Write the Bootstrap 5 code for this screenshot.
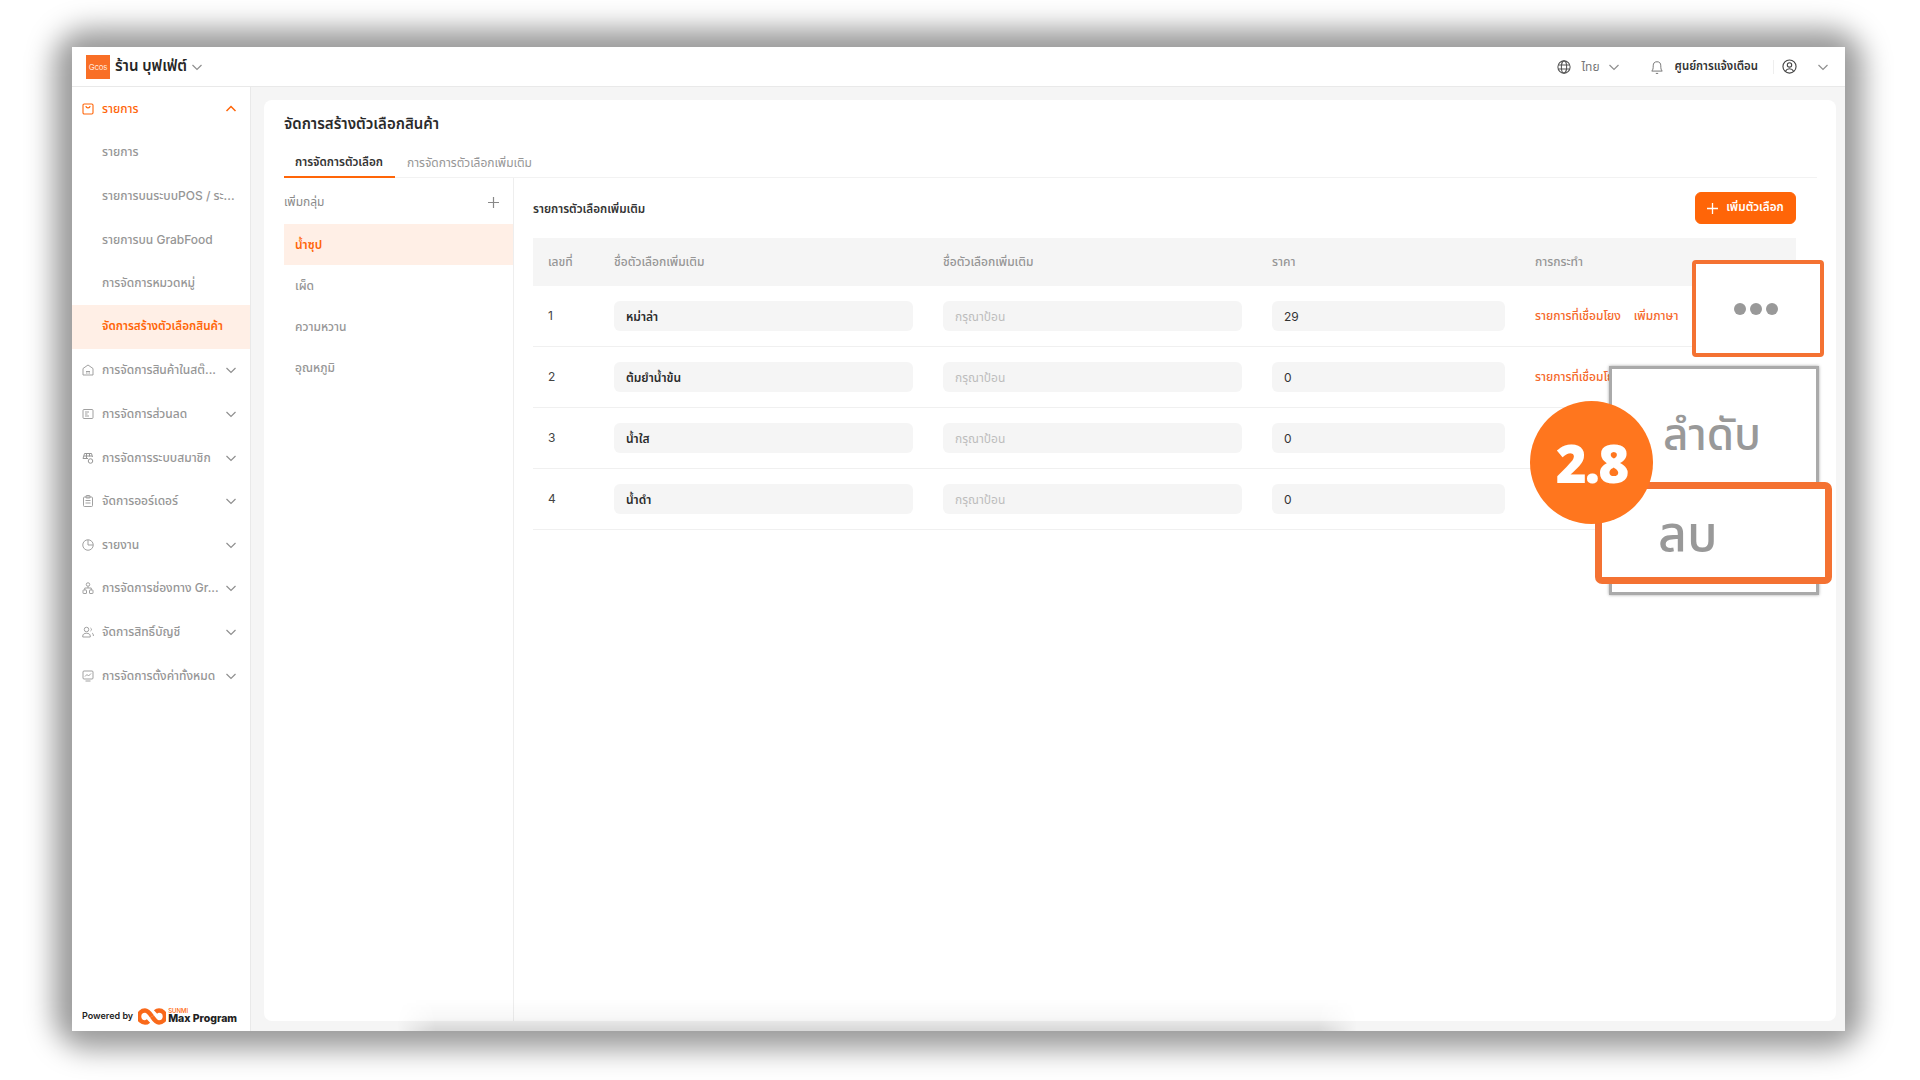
<!DOCTYPE html>
<html lang="th">
<head>
    <meta charset="UTF-8">
    <title>จัดการสร้างตัวเลือกสินค้า</title>
    <link rel="stylesheet" href="https://cdn.jsdelivr.net/npm/bootstrap@5.3.0/dist/css/bootstrap.min.css">
    <style>
        :root {
            --brand: #ff6508;
            --brand-soft: #ffefe6;
            --mark: #f47232;
            --muted: #969696;
            --ink: #262626;
        }

        html, body { height: 100%; }

        body {
            background: #fff;
            padding: 47px 75px 49px 72px;
            overflow: hidden;
            font-family: Inter, "Noto Sans Thai", "Noto Sans", "Noto Sans CJK SC", sans-serif;
            font-size: 12px;
            color: var(--ink);
        }

        /* window */
        .shot-window {
            position: relative;
            height: 984px;
            background: #f5f5f5;
        }

        /* soft rounded shadow round the window */
        .shot-window::before {
            content: "";
            position: absolute;
            inset: -18px;
            z-index: -1;
            border-radius: 34px;
            background: rgba(0, 0, 0, .4);
            filter: blur(14px);
        }

        /* smudge along the bottom edge of the picture */
        .shot-window::after {
            content: "";
            position: absolute;
            left: 325px;
            bottom: 0;
            width: 960px;
            height: 32px;
            pointer-events: none;
            background: linear-gradient(to bottom, rgba(0, 0, 0, 0), rgba(0, 0, 0, .03) 60%, rgba(0, 0, 0, .12));
            -webkit-mask-image: linear-gradient(to right, transparent, #000 4%, #000 96%, transparent);
        }

        .top-bar {
            height: 40px;
            background: #fff;
            border-bottom: 1px solid #e9e9e9;
            padding: 0 16px 0 14px;
        }

        .shop-logo {
            width: 24px;
            height: 24px;
            background: #f96f26;
            color: #ffe6d8;
            font-size: 8px;
            line-height: 24px;
            text-align: center;
            letter-spacing: -.3px;
        }

        .shop-name { font-size: 15px; font-weight: 600; margin-left: 5px; }
        .chev { color: #8f8f8f; flex: none; }
        .top-label { font-size: 12px; color: #777; }
        .top-strong { font-size: 11.400px; font-weight: 600; color: #333; }
        .top-rule { width: 1px; height: 14px; background: #eee; }

        /* sidebar */
        .side-bar {
            width: 179px;
            flex: none;
            background: #fff;
            border-right: 1px solid #e9e9e9;
        }

        .side-item {
            height: 43.6px;
            padding: 0 13px 0 10px;
            color: var(--muted);
            font-weight: 500;
            white-space: nowrap;
        }

        .side-item svg.ico { width: 12px; height: 12px; flex: none; margin-right: 8px; }
        .side-text { flex: 1; }
        .side-sub { padding-left: 30px; }
        .side-open { color: var(--brand); }
        .side-on { color: var(--brand); background: var(--brand-soft); font-weight: 600; font-size: 11.700px; }

        .power-row {
            margin-top: auto;
            height: 30px;
            padding: 0 0 0 10px;
            font-size: 9px;
            font-weight: 600;
            color: #222;
            white-space: nowrap;
        }

        .max-word { font-size: 10.500px; font-weight: 800; line-height: 10px; color: #222; }
        .sunmi-word { font-size: 6px; line-height: 6px; color: var(--brand); font-weight: 500; }

        /* content */
        .page-wrap { padding: 13px 9px 10px 13px; min-width: 0; }

        .page-card {
            background: #fff;
            border-radius: 8px;
            padding: 12px 0 0 20px;
        }

        .page-title { font-size: 15px; font-weight: 600; margin: 0; line-height: 24px; color: #2b2b2b; }

        .tab-strip {
            margin: 14px 19px 0 0;
            border-bottom: 1px solid #f2f2f2;
            height: 28px;
        }

        .tab-link {
            padding: 0 12px;
            font-size: 12px;
            line-height: 25px;
            color: var(--muted);
            height: 28px;
            border-bottom: 2px solid transparent;
        }

        .tab-link.is-on { color: #333; font-weight: 600; border-bottom-color: var(--brand); width: 111px; padding: 0 11px; white-space: nowrap; font-size: 11.700px; }

        .group-col { width: 230px; flex: none; border-right: 1px solid #eee; }
        .group-head { height: 46px; color: #8a8a8a; padding: 2px 14px 0 0; }
        .group-row { height: 41px; padding-left: 11px; color: var(--muted); font-weight: 500; line-height: 41px; }
        .group-row.is-on { background: var(--brand-soft); color: var(--brand); font-weight: 600; }

        .option-col { padding: 14px 40px 0 19px; min-width: 0; }
        .option-title { font-size: 11.700px; font-weight: 600; color: #333; padding-top: 3px; }

        .add-btn {
            width: 101px;
            height: 32px;
            padding: 0;
            font-size: 11.700px;
            font-weight: 600;
            background: var(--brand);
            border-color: var(--brand);
            border-radius: 6px;
        }

        .opt-table { table-layout: fixed; width: 100%; margin: 14px 0 0; }
        .opt-table th {
            height: 48px;
            background: #f5f5f5;
            color: var(--muted);
            font-weight: 500;
            padding: 0 15px;
            vertical-align: middle;
            border: 0;
        }

        .opt-table td {
            height: 60.750px;
            padding: 0 15px;
            vertical-align: middle;
            border-bottom: 1px solid #f0f0f0;
            white-space: nowrap;
            color: #444;
        }

        .opt-field {
            height: 30px;
            line-height: 31px;
            padding: 0 12px;
            background: #f5f5f5;
            border: 0;
            border-radius: 6px;
            font-size: 12px;
            color: #333;
        }

        .opt-field.is-name { font-weight: 600; color: #2b2b2b; }
        .opt-field.is-empty { color: #bdbdbd; }
        .act-link { color: #f5682a; margin-right: 13px; font-weight: 500; }

        /* tutorial marks over the page */
        .mark-dots {
            position: absolute;
            left: 1620px;
            top: 213px;
            width: 132px;
            height: 97px;
            padding-right: 4px;
            background: #fff;
            border: 4px solid var(--mark);
            border-radius: 4px;
            z-index: 2;
        }

        .mark-dots i { width: 12px; height: 12px; border-radius: 50%; background: #999; }

        .mark-menu {
            position: absolute;
            left: 1537px;
            top: 319px;
            width: 210px;
            height: 229px;
            background: #fff;
            border: 3px solid #aaa;
            box-shadow: 0 0 3px rgba(0, 0, 0, .35);
            color: #999;
            font-size: 44px;
            font-weight: 500;
            line-height: 60px;
            padding: 35px 0 0 51px;
            z-index: 2;
        }

        .mark-del {
            position: absolute;
            left: 1523px;
            top: 435px;
            width: 237px;
            height: 102px;
            background: #fff;
            border: 7px solid var(--mark);
            border-radius: 7px;
            color: #999;
            font-size: 50px;
            font-weight: 500;
            line-height: 60px;
            padding: 14px 0 0 56px;
            z-index: 2;
        }

        .mark-badge {
            position: absolute;
            left: 1458px;
            top: 354px;
            width: 123px;
            height: 123px;
            border-radius: 50%;
            background: #ff761e;
            color: #fff;
            font-family: "Open Sans", sans-serif;
            font-size: 53px;
            font-weight: 800;
            letter-spacing: -2px;
            z-index: 2;
        }
    </style>
</head>
<body>

    <div class="shot-window d-flex flex-column">

        <header class="top-bar d-flex align-items-center flex-none">
            <div class="shop-logo">Gcos</div>
            <span class="shop-name">ร้าน บุฟเฟ่ต์</span>
            <svg class="chev ms-1" width="12" height="12" viewBox="0 0 12 12" fill="none" stroke="currentColor" stroke-width="1.2"><path d="M1.5 4l4.5 4.5L10.500 4"/></svg>

            <svg class="ms-auto" width="14" height="14" viewBox="0 0 24 24" fill="none" stroke="#555" stroke-width="1.8"><circle cx="12" cy="12" r="10.500"/><ellipse cx="12" cy="12" rx="4.500" ry="10.500"/><path d="M2 8.500h20M2 15.500h20"/></svg>
            <span class="top-label" style="margin-left:10px">ไทย</span>
            <svg class="chev" style="margin-left:8px" width="12" height="12" viewBox="0 0 12 12" fill="none" stroke="currentColor" stroke-width="1.2"><path d="M1.5 4l4.5 4.5L10.500 4"/></svg>
            <svg style="margin-left:30px" width="14" height="16" viewBox="0 0 24 26" fill="none" stroke="#777" stroke-width="1.7"><path d="M3 20c2-2 2.500-4 2.500-9a6.500 7 0 0 1 13 0c0 5 .5 7 2.500 9z"/><path d="M10 24h4"/></svg>
            <span class="top-strong" style="margin-left:11px">ศูนย์การแจ้งเตือน</span>
            <span class="top-rule" style="margin-left:15px"></span>
            <svg style="margin-left:8px" width="15" height="15" viewBox="0 0 24 24" fill="none" stroke="#444" stroke-width="1.8"><circle cx="12" cy="12" r="10.500"/><circle cx="12" cy="9.500" r="3.500"/><path d="M5.500 19.500c1.500-3 4-4 6.500-4s5 1 6.500 4"/></svg>
            <svg class="chev" style="margin-left:20px" width="12" height="12" viewBox="0 0 12 12" fill="none" stroke="currentColor" stroke-width="1.2"><path d="M1.500 4l4.500 4.500L10.500 4"/></svg>
        </header>

        <div class="d-flex flex-grow-1" style="min-height:0">

            <aside class="side-bar d-flex flex-column">
                <div class="side-item side-open d-flex align-items-center">
                    <svg class="ico" viewBox="0 0 24 24" fill="none" stroke="currentColor" stroke-width="2.200"><rect x="2" y="2" width="20" height="20" rx="2.500"/><path d="M8 6c0 5 8 5 8 0"/></svg>
                    <span class="side-text">รายการ</span>
                    <svg width="12" height="12" viewBox="0 0 12 12" fill="none" stroke="currentColor" stroke-width="1.500"><path d="M1.500 8L6 3.500 10.500 8"/></svg>
                </div>
                <div class="side-item side-sub d-flex align-items-center"><span class="side-text">รายการ</span></div>
                <div class="side-item side-sub d-flex align-items-center"><span class="side-text">รายการบนระบบPOS / ระ...</span></div>
                <div class="side-item side-sub d-flex align-items-center"><span class="side-text">รายการบน GrabFood</span></div>
                <div class="side-item side-sub d-flex align-items-center"><span class="side-text">การจัดการหมวดหมู่</span></div>
                <div class="side-item side-sub side-on d-flex align-items-center"><span class="side-text">จัดการสร้างตัวเลือกสินค้า</span></div>

                <div class="side-item d-flex align-items-center">
                    <svg class="ico" viewBox="0 0 24 24" fill="none" stroke="currentColor" stroke-width="1.800"><path d="M2 22V9l10-7 10 7v13z"/><path d="M8 18h3M13 18h3M8 15h8"/></svg>
                    <span class="side-text">การจัดการสินค้าในสต๊...</span>
                    <svg class="chev" width="12" height="12" viewBox="0 0 12 12" fill="none" stroke="currentColor" stroke-width="1.200"><path d="M1.500 4l4.500 4.500L10.500 4"/></svg>
                </div>
                <div class="side-item d-flex align-items-center">
                    <svg class="ico" viewBox="0 0 24 24" fill="none" stroke="currentColor" stroke-width="1.800"><rect x="2" y="3" width="20" height="18" rx="2"/><path d="M6 8h8M6 12h5M6 16h8"/></svg>
                    <span class="side-text">การจัดการส่วนลด</span>
                    <svg class="chev" width="12" height="12" viewBox="0 0 12 12" fill="none" stroke="currentColor" stroke-width="1.200"><path d="M1.500 4l4.500 4.500L10.500 4"/></svg>
                </div>
                <div class="side-item d-flex align-items-center">
                    <svg class="ico" viewBox="0 0 24 24" fill="none" stroke="currentColor" stroke-width="2"><path d="M12 13H2l3-10h14l2 7"/><path d="M9 3v10M15 3v6M4 8h16"/><circle cx="17" cy="18" r="4.500"/></svg>
                    <span class="side-text">การจัดการระบบสมาชิก</span>
                    <svg class="chev" width="12" height="12" viewBox="0 0 12 12" fill="none" stroke="currentColor" stroke-width="1.200"><path d="M1.500 4l4.500 4.500L10.500 4"/></svg>
                </div>
                <div class="side-item d-flex align-items-center">
                    <svg class="ico" viewBox="0 0 24 24" fill="none" stroke="currentColor" stroke-width="1.800"><rect x="3" y="4" width="18" height="19" rx="2"/><rect x="8" y="1" width="8" height="5" rx="1"/><path d="M7 11h10M7 16h10"/></svg>
                    <span class="side-text">จัดการออร์เดอร์</span>
                    <svg class="chev" width="12" height="12" viewBox="0 0 12 12" fill="none" stroke="currentColor" stroke-width="1.200"><path d="M1.500 4l4.500 4.500L10.500 4"/></svg>
                </div>
                <div class="side-item d-flex align-items-center">
                    <svg class="ico" viewBox="0 0 24 24" fill="none" stroke="currentColor" stroke-width="1.800"><circle cx="12" cy="12" r="10.500"/><path d="M12 2v10h10"/></svg>
                    <span class="side-text">รายงาน</span>
                    <svg class="chev" width="12" height="12" viewBox="0 0 12 12" fill="none" stroke="currentColor" stroke-width="1.200"><path d="M1.500 4l4.500 4.500L10.500 4"/></svg>
                </div>
                <div class="side-item d-flex align-items-center">
                    <svg class="ico" viewBox="0 0 24 24" fill="none" stroke="currentColor" stroke-width="1.800"><circle cx="12" cy="5" r="3.500"/><rect x="2" y="16" width="7" height="7" rx="1"/><rect x="15" y="16" width="7" height="7" rx="1"/><path d="M12 9v3M5.500 16v-4h13v4"/></svg>
                    <span class="side-text">การจัดการช่องทาง Gr...</span>
                    <svg class="chev" width="12" height="12" viewBox="0 0 12 12" fill="none" stroke="currentColor" stroke-width="1.200"><path d="M1.500 4l4.500 4.500L10.500 4"/></svg>
                </div>
                <div class="side-item d-flex align-items-center">
                    <svg class="ico" viewBox="0 0 24 24" fill="none" stroke="currentColor" stroke-width="1.800"><circle cx="9" cy="7" r="4.500"/><path d="M1.500 22v-2c0-3.500 3-5.500 7.500-5.500s7.500 2 7.500 5.500v2z"/><path d="M17 4c2.500 1 2.500 5 0 6M20 14c2 1 2.800 3 2.800 6"/></svg>
                    <span class="side-text">จัดการสิทธิ์บัญชี</span>
                    <svg class="chev" width="12" height="12" viewBox="0 0 12 12" fill="none" stroke="currentColor" stroke-width="1.200"><path d="M1.500 4l4.500 4.500L10.500 4"/></svg>
                </div>
                <div class="side-item d-flex align-items-center">
                    <svg class="ico" viewBox="0 0 24 24" fill="none" stroke="currentColor" stroke-width="1.800"><rect x="2" y="2" width="20" height="16" rx="2"/><path d="M6 13l4-4 3 3 5-5M7 22h10"/></svg>
                    <span class="side-text">การจัดการตั้งค่าทั้งหมด</span>
                    <svg class="chev" width="12" height="12" viewBox="0 0 12 12" fill="none" stroke="currentColor" stroke-width="1.200"><path d="M1.500 4l4.500 4.500L10.500 4"/></svg>
                </div>

                <div class="power-row d-flex align-items-center">
                    <span>Powered by</span>
                    <svg class="flex-shrink-0" style="margin-left:5px" width="28" height="17" viewBox="0 0 28 17" fill="none" stroke="#f9691a" stroke-width="4.600"><path d="M14 8.500C11 4 9.500 2.500 7 2.500a6 6 0 0 0 0 12c1.500 0 2.500-.5 3.500-1.500"/><path d="M14 8.500c3 4.500 4.500 6 7 6a6 6 0 0 0 0-12c-1.500 0-2.500.5-3.500 1.500"/></svg>
                    <div style="margin-left:2px">
                        <div class="sunmi-word">SUNMI</div>
                        <div class="max-word">Max Program</div>
                    </div>
                </div>
            </aside>

            <main class="page-wrap flex-grow-1 d-flex">
                <div class="page-card flex-grow-1 d-flex flex-column">
                    <h1 class="page-title">จัดการสร้างตัวเลือกสินค้า</h1>

                    <div class="tab-strip nav">
                        <div class="tab-link is-on">การจัดการตัวเลือก</div>
                        <div class="tab-link">การจัดการตัวเลือกเพิ่มเติม</div>
                    </div>

                    <div class="d-flex flex-grow-1">
                        <div class="group-col">
                            <div class="group-head d-flex align-items-center justify-content-between">
                                <span>เพิ่มกลุ่ม</span>
                                <svg width="11" height="11" viewBox="0 0 11 11" stroke="#888" stroke-width="1.200"><path d="M5.500 0v11M0 5.500h11"/></svg>
                            </div>
                            <div class="group-row is-on">น้ำซุป</div>
                            <div class="group-row">เผ็ด</div>
                            <div class="group-row">ความหวาน</div>
                            <div class="group-row">อุณหภูมิ</div>
                        </div>

                        <div class="option-col flex-grow-1">
                            <div class="d-flex align-items-center justify-content-between">
                                <span class="option-title">รายการตัวเลือกเพิ่มเติม</span>
                                <button class="btn btn-primary add-btn d-flex align-items-center justify-content-center gap-2" type="button">
                                    <svg width="11" height="11" viewBox="0 0 11 11" stroke="#fff" stroke-width="1.300"><path d="M5.500 0v11M0 5.500h11"/></svg>
                                    เพิ่มตัวเลือก
                                </button>
                            </div>

                            <table class="table opt-table">
                                <colgroup><col style="width:66px"><col style="width:329px"><col style="width:329px"><col style="width:263px"><col></colgroup>
                                <thead>
                                    <tr><th>เลขที่</th><th>ชื่อตัวเลือกเพิ่มเติม</th><th>ชื่อตัวเลือกเพิ่มเติม</th><th>ราคา</th><th>การกระทำ</th></tr>
                                </thead>
                                <tbody>
                                    <tr>
                                        <td>1</td>
                                        <td><div class="opt-field is-name">หม่าล่า</div></td>
                                        <td><div class="opt-field is-empty">กรุณาป้อน</div></td>
                                        <td><div class="opt-field">29</div></td>
                                        <td><span class="act-link">รายการที่เชื่อมโยง</span><span class="act-link">เพิ่มภาษา</span></td>
                                    </tr>
                                    <tr>
                                        <td>2</td>
                                        <td><div class="opt-field is-name">ต้มยำน้ำข้น</div></td>
                                        <td><div class="opt-field is-empty">กรุณาป้อน</div></td>
                                        <td><div class="opt-field">0</div></td>
                                        <td><span class="act-link">รายการที่เชื่อมโยง</span></td>
                                    </tr>
                                    <tr>
                                        <td>3</td>
                                        <td><div class="opt-field is-name">น้ำใส</div></td>
                                        <td><div class="opt-field is-empty">กรุณาป้อน</div></td>
                                        <td><div class="opt-field">0</div></td>
                                        <td></td>
                                    </tr>
                                    <tr>
                                        <td>4</td>
                                        <td><div class="opt-field is-name">น้ำดำ</div></td>
                                        <td><div class="opt-field is-empty">กรุณาป้อน</div></td>
                                        <td><div class="opt-field">0</div></td>
                                        <td></td>
                                    </tr>
                                </tbody>
                            </table>
                        </div>
                    </div>
                </div>
            </main>
        </div>

        <div class="mark-dots d-flex align-items-center justify-content-center gap-1"><i></i><i></i><i></i></div>
        <div class="mark-menu">ลำดับ</div>
        <div class="mark-del">ลบ</div>
        <div class="mark-badge d-flex align-items-center justify-content-center">2.8</div>
    </div>

</body>
</html>
